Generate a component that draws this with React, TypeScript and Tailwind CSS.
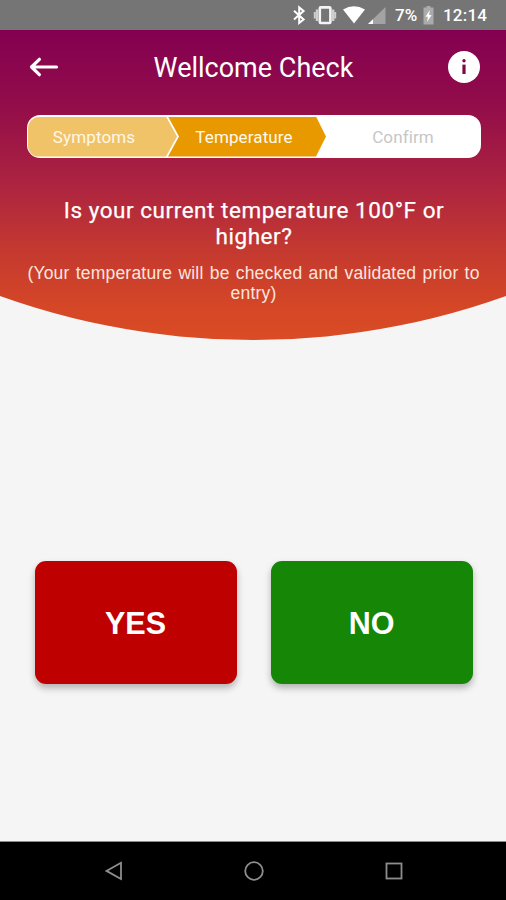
import { clsx } from "clsx";

const ANSWERS = [
  { label: "YES", color: "bg-[#bf0000]" },
  { label: "NO", color: "bg-[#168606]" },
];

function StatusBar() {
  return (
    <div className="h-[30px] shrink-0 bg-[#757575] flex items-center text-white font-medium text-[17px]">
      <svg width="110" height="30" viewBox="280 0 110 30" className="ml-[280px] shrink-0">
        <path d="M294 10.8 L303.6 19.4 L299.2 23 V7.4 L303.6 11 L294 19.6" fill="none" stroke="#fff" strokeWidth="2" />
        <rect x="319.8" y="7.4" width="10.6" height="15.6" rx="1" fill="none" stroke="#f4f4f4" strokeWidth="2.6" />
        <path d="M317 9.5 V21 M333.2 9.5 V21" stroke="#cfcfcf" strokeWidth="2.4" />
        <path d="M314.8 12 V18.5 M335.2 12 V18.5" stroke="#cfcfcf" strokeWidth="2" />
        <path d="M343 9.6 Q354 2.8 365 9.6 L354 23.6 Z" fill="#fff" />
        <path d="M385.5 7 V24 H368 Z" fill="#a3a3a3" />
        <path d="M373 19.2 V24 H368 Z" fill="#fff" />
      </svg>
      <span className="w-[33px] pl-[5px] pt-[2px] whitespace-nowrap">7%</span>
      <svg width="12" height="30" viewBox="423 0 12 30" className="shrink-0">
        <path d="M426.5 6 h4 v1.5 h3 V24.5 h-10 V7.5 h3 Z" fill="#ababab" />
        <path d="M429.8 10 L425.5 16.7 h2.4 L427 22 L431.6 15 h-2.5 Z" fill="#fff" />
      </svg>
      <span className="pl-[8px] pt-[2px] tracking-[0.2px] whitespace-nowrap">12:14</span>
    </div>
  );
}

function Steps() {
  return (
    <div className="ml-[26.5px] mt-[30px] w-[454px] h-[43px] rounded-[13px] bg-white p-[1.5px] text-[17px] tracking-[0.12px]">
      <div className="h-full w-full flex rounded-[11.5px] overflow-hidden bg-white">
        <div className="w-[149px] h-full shrink-0 flex items-center justify-center pr-[17px] pt-[2px] text-[#fff7e6] bg-[#f0c369] [clip-path:polygon(0_0,138px_0,149px_50%,138px_100%,0_100%)]">
          Symptoms
        </div>
        <div className="w-[158px] h-full shrink-0 -ml-[9px] flex items-center justify-center pr-[6px] pt-[2px] text-[#fffaf0] bg-[#e89900] [clip-path:polygon(0_0,148px_0,158px_50%,148px_100%,0_100%,11px_50%)]">
          Temperature
        </div>
        <div className="flex-1 flex items-center justify-center pl-[1px] pt-[2px] text-[#c6c6c6]">Confirm</div>
      </div>
    </div>
  );
}

function Header() {
  return (
    <div className="h-[310px] shrink-0 text-white bg-[linear-gradient(180deg,#830051_0%,#930d49_25%,#ad2440_50%,#c33830_70%,#d54726_90%,#d94c24_100%)] [clip-path:circle(749px_at_50%_-439px)]">
      <div className="pt-[21px] pl-[27px] pr-[26px] flex items-center justify-between">
        <button className="w-8 h-[34px] flex items-center">
          <svg width="32" height="22" viewBox="0 0 32 22" fill="none" stroke="#fff" strokeWidth="3.2">
            <path d="M29.5 10 H5 M12.4 2.3 L4.5 10 L12.4 17.7" strokeLinecap="round" strokeLinejoin="round" />
          </svg>
        </button>
        <h1 className="text-[27px] leading-[34px] whitespace-nowrap">Wellcome Check</h1>
        <button className="w-8 h-8 -mt-[2px] rounded-full bg-white">
          <svg width="32" height="32" viewBox="0 0 32 32" fill="#7a0b45">
            <circle cx="16" cy="9.8" r="1.7" />
            <path d="M14.4 13.6 h3.2 v9.4 h-3.2 Z" />
          </svg>
        </button>
      </div>
      <Steps />
      <p className="mt-[39px] text-center text-[22.5px] leading-[26px] tracking-[0.53px] pl-[2px] [-webkit-text-stroke:0.25px_white]">
        Is your current temperature 100°F or
        <br />
        higher?
      </p>
      <p className="mt-[14px] text-center text-[#fbe5df] text-[17.5px] leading-[20px] tracking-[0.2px] [word-spacing:1.1px] pl-[1px] whitespace-nowrap font-['Liberation_Sans',sans-serif]">
        (Your temperature will be checked and validated prior to
        <br />
        entry)
      </p>
    </div>
  );
}

function NavBar() {
  return (
    <div className="h-[59px] shrink-0 bg-black border-t border-[#8a8a8a] pl-[1px] flex items-center justify-center gap-[120px]">
      <svg width="20" height="20" viewBox="0 0 20 20" fill="none" stroke="#8d8d8d" strokeWidth="1.8">
        <path d="M17 1.8 V18 L2.5 9.9 Z" />
      </svg>
      <svg width="20" height="20" viewBox="0 0 20 20" fill="none" stroke="#8d8d8d" strokeWidth="1.8">
        <circle cx="10" cy="10" r="8.8" />
      </svg>
      <svg width="20" height="20" viewBox="0 0 20 20" fill="none" stroke="#8d8d8d" strokeWidth="1.8">
        <rect x="2.5" y="2.5" width="15" height="15" />
      </svg>
    </div>
  );
}

export default function App() {
  return (
    <div className="w-[506px] h-[900px] flex flex-col bg-[#f5f5f5] overflow-hidden font-[Roboto,sans-serif]">
      <StatusBar />
      <Header />
      <div className="flex-1 pt-[221px] pl-[1px] flex justify-center gap-[34px]">
        {ANSWERS.map((answer) => (
          <button
            key={answer.label}
            className={clsx(
              "w-[202px] h-[123px] pt-[2px] rounded-[11px] text-white text-[30.5px] font-bold shadow-[0_4px_7px_rgba(0,0,0,0.28)] font-['Liberation_Sans',sans-serif]",
              answer.color
            )}
          >
            {answer.label}
          </button>
        ))}
      </div>
      <NavBar />
    </div>
  );
}
